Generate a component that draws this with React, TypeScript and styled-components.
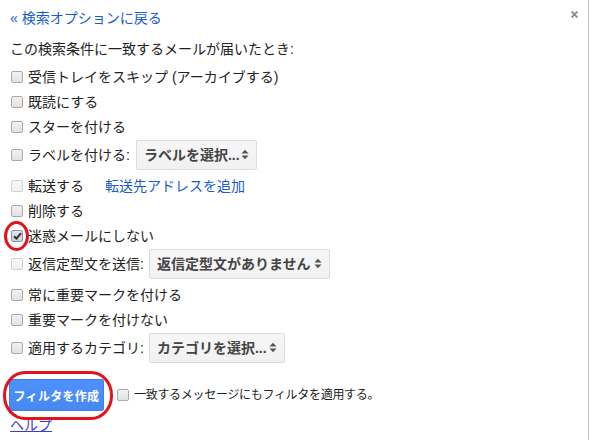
import React from "react";
import styled, { createGlobalStyle, css } from "styled-components";

const Global = createGlobalStyle`
  html, body { margin: 0; padding: 0; background: #fff; }
  body {
    font-family: "Liberation Sans", "Noto Sans CJK JP", sans-serif;
    font-size: 14px;
    color: #222;
  }
`;

const Dialog = styled.div`
  position: relative;
  box-sizing: border-box;
  width: 589px;
  height: 440px;
  border-right: 1px solid #c2c2c2;
  padding: 9px 10px 0 10px;
  display: flex;
  flex-direction: column;
  overflow: hidden;
`;

const Header = styled.div`
  display: flex;
  justify-content: space-between;
  align-items: flex-start;
  height: 18px;
`;

const Link = styled.a<{ $under?: boolean; $color?: string }>`
  color: ${(p) => p.$color || "#1a5ccf"};
  text-decoration: ${(p) => (p.$under ? "underline" : "none")};
  line-height: 18px;
  cursor: pointer;
`;

const Close = styled.svg`
  margin-top: 2px;
  flex: none;
`;

const Heading = styled.div`
  margin-top: 13px;
  line-height: 18px;
  margin-bottom: 6px;
`;

const Row = styled.div<{ $tall?: boolean }>`
  display: flex;
  align-items: center;
  height: ${(p) => (p.$tall ? "31px" : "25px")};
  margin-bottom: ${(p) => (p.$tall ? "3px" : "0")};
  line-height: 18px;
  white-space: nowrap;
`;

const BoxWrap = styled.span<{ $ml?: number }>`
  position: relative;
  display: inline-flex;
  margin-left: ${(p) => p.$ml ?? 1}px;
  margin-right: 5px;
  flex: none;
`;

const Box = styled.span<{ $state?: "on" | "off" | "dis" }>`
  box-sizing: border-box;
  width: 12px;
  height: 12px;
  border-radius: 2px;
  display: inline-flex;
  align-items: center;
  justify-content: center;
  ${(p) =>
    p.$state === "dis"
      ? css`
          border: 1px solid #d2d2d2;
          background: linear-gradient(#f8f8f8, #f0f0f0);
        `
      : p.$state === "on"
      ? css`
          border: 1px solid #7c95c9;
          background: linear-gradient(#e4e4e4, #d2d2d2);
        `
      : css`
          border: 1px solid #a9a9a9;
          background: linear-gradient(#f2f2f2, #e2e2e2);
        `}
`;

const CircleMark = styled.span`
  position: absolute;
  left: -7px;
  top: -9px;
  width: 25px;
  height: 30px;
  box-sizing: border-box;
  border: 3px solid #e3121b;
  border-radius: 50%;
  pointer-events: none;
`;

const ButtonMark = styled.span`
  position: absolute;
  left: -7px;
  top: -8px;
  width: 110px;
  height: 49px;
  box-sizing: border-box;
  border: 3px solid #e3121b;
  border-radius: 22px / 24px;
  pointer-events: none;
`;

const Label = styled.span`
  color: #222;
`;

const Select = styled.div<{ $w: number; $ml: number }>`
  box-sizing: border-box;
  width: ${(p) => p.$w}px;
  height: 30px;
  margin-left: ${(p) => p.$ml}px;
  padding: 0 7px 0 7px;
  display: flex;
  align-items: center;
  justify-content: space-between;
  border: 1px solid #dcdcdc;
  border-radius: 2px;
  background: linear-gradient(#f6f6f6, #f1f1f1);
  font-weight: bold;
  color: #444;
`;

const Arrows = () => (
  <svg width="8" height="11" viewBox="0 0 8 11">
    <path d="M0.5 4.5 L4 0.8 L7.5 4.5 Z" fill="#555" />
    <path d="M0.5 6.5 L4 10.2 L7.5 6.5 Z" fill="#555" />
  </svg>
);

const ForwardLink = styled(Link)`
  margin-left: 21px;
`;

const Footer = styled.div`
  display: flex;
  align-items: center;
  margin-top: 13px;
`;

const BtnWrap = styled.span`
  position: relative;
  display: inline-flex;
`;

const Button = styled.button`
  box-sizing: border-box;
  width: 95px;
  height: 32px;
  border: 1px solid #3b82f0;
  border-radius: 2px;
  background: linear-gradient(#4e91fd, #4788f2);
  color: #fff;
  font-family: "Liberation Sans", "Noto Sans CJK JP", sans-serif;
  font-weight: bold;
  font-size: 12px;
  letter-spacing: 0.3px;
  padding: 0;
  margin-left: -1px;
`;

const ApplyText = styled.span`
  font-size: 12px;
  letter-spacing: -0.3px;
  line-height: 18px;
`;

const Help = styled(Link)`
  margin-top: 5px;
  align-self: flex-start;
`;

type CB = "on" | "off" | "dis";

const Check = ({ state, ml, circle }: { state: CB; ml?: number; circle?: boolean }) => (
  <BoxWrap $ml={ml}>
    <Box $state={state}>
      {state === "on" && (
        <svg width="9" height="8" viewBox="0 0 9 8">
          <path d="M1 4.2 L3.4 6.6 L8 1.2" stroke="#333" strokeWidth="2" fill="none" />
        </svg>
      )}
    </Box>
    {circle && <CircleMark />}
  </BoxWrap>
);

export default function App() {
  return (
    <>
      <Global />
      <Dialog>
        <Header>
          <Link>« 検索オプションに戻る</Link>
          <Close width="7" height="7" viewBox="0 0 7 7">
            <path d="M0.5 0.5 L6.5 6.5 M6.5 0.5 L0.5 6.5" stroke="#8a8a8a" strokeWidth="1.8" />
          </Close>
        </Header>
        <Heading>この検索条件に一致するメールが届いたとき:</Heading>

        <Row>
          <Check state="off" />
          <Label>受信トレイをスキップ (アーカイブする)</Label>
        </Row>
        <Row>
          <Check state="off" />
          <Label>既読にする</Label>
        </Row>
        <Row>
          <Check state="off" />
          <Label>スターを付ける</Label>
        </Row>
        <Row $tall>
          <Check state="off" />
          <Label>ラベルを付ける:</Label>
          <Select $w={121} $ml={6}>
            <span>ラベルを選択...</span>
            <Arrows />
          </Select>
        </Row>
        <Row>
          <Check state="dis" />
          <Label>転送する</Label>
          <ForwardLink>転送先アドレスを追加</ForwardLink>
        </Row>
        <Row>
          <Check state="off" />
          <Label>削除する</Label>
        </Row>
        <Row>
          <Check state="on" circle />
          <Label>迷惑メールにしない</Label>
        </Row>
        <Row $tall>
          <Check state="dis" />
          <Label>返信定型文を送信:</Label>
          <Select $w={181} $ml={5}>
            <span>返信定型文がありません</span>
            <Arrows />
          </Select>
        </Row>
        <Row>
          <Check state="off" />
          <Label>常に重要マークを付ける</Label>
        </Row>
        <Row>
          <Check state="off" />
          <Label>重要マークを付けない</Label>
        </Row>
        <Row $tall>
          <Check state="off" />
          <Label>適用するカテゴリ:</Label>
          <Select $w={136} $ml={5}>
            <span>カテゴリを選択...</span>
            <Arrows />
          </Select>
        </Row>

        <Footer>
          <BtnWrap>
            <Button>フィルタを作成</Button>
            <ButtonMark />
          </BtnWrap>
          <Check state="off" ml={13} />
          <ApplyText>一致するメッセージにもフィルタを適用する。</ApplyText>
        </Footer>
        <Help $under $color="#3b3bd6">ヘルプ</Help>
      </Dialog>
    </>
  );
}
